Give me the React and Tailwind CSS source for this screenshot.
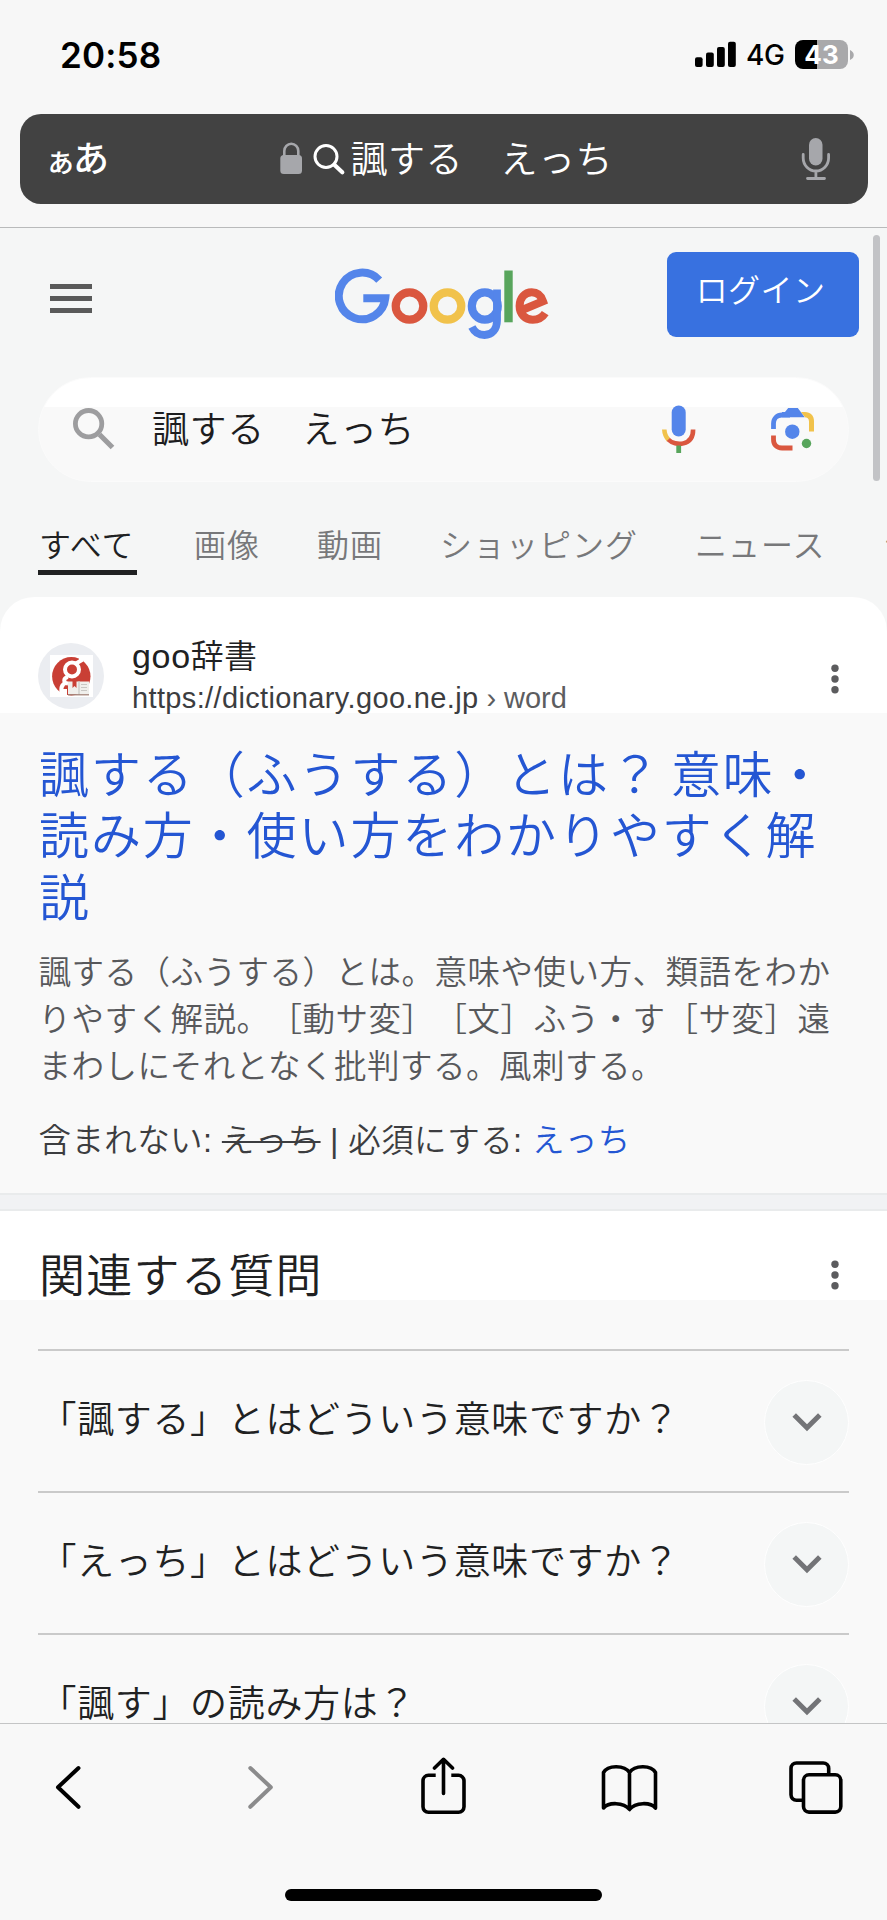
const jp = "font-['Liberation_Sans','Noto_Sans_CJK_JP',sans-serif] [text-spacing-trim:space-all]";

function StatusBar() {
  return (
    <div className="flex h-[114px] items-start pl-[60px] pr-[33px] font-['Inter',sans-serif] text-black">
      <span className="mt-[32.500px] text-[35px] leading-[44px] font-semibold tracking-[0.150px]">20:58</span>
      <svg className="mt-[41px] ml-auto h-[28px] w-[44px]" viewBox="694 41 44 28">
        <rect x="695" y="57.3" width="7.6" height="9.8" rx="2" />
        <rect x="706" y="52.6" width="7.8" height="14.5" rx="2" />
        <rect x="717" y="47" width="7.8" height="20.1" rx="2" />
        <rect x="728" y="41.8" width="7.8" height="25.3" rx="2" />
      </svg>
      <span className="mt-[38px] ml-[8px] w-[40px] text-[28px] leading-[34px] font-medium tracking-[-0.5px]">4G</span>
      <div className="mt-[40px] ml-[9px] flex h-[29px] w-[53px] items-center justify-center rounded-[8px] bg-[linear-gradient(90deg,#000_0,#000_22.5px,#a9a9ab_22.5px)]">
        <span className="text-[26px] leading-[29px] font-bold text-white">43</span>
      </div>
      <svg className="mt-[49px] ml-[2px] h-[12px] w-[4px]" viewBox="0 0 4 12">
        <path d="M0 1c5 2 5 8 0 10z" fill="#a9a9ab" />
      </svg>
    </div>
  );
}

function AddressBar() {
  return (
    <div className="mr-[19px] ml-[19.5px] flex h-[90px] items-center rounded-[21px] bg-[#424242] text-white">
      <span className={`${jp} mt-[4px] ml-[25.500px] flex w-[84.500px] items-baseline font-medium`}>
        <span className="text-[31px] leading-[50px]">ぁ</span>
        <span className="-ml-[3px] text-[36px] leading-[50px]">あ</span>
      </span>
      <svg className="ml-[149px] h-[34px] w-[68px]" viewBox="279 142 68 34">
        <rect x="280.3" y="155" width="21.7" height="19" rx="3.5" fill="#a6a7ab" />
        <path d="M284.3 157v-6a7 7.2 0 0 1 14 0v6" fill="none" stroke="#a6a7ab" strokeWidth="2.6" />
        <circle cx="326" cy="156.5" r="11" fill="none" stroke="#fff" strokeWidth="3" />
        <path d="M334.3 164.8l8 7.5" stroke="#fff" strokeWidth="4.2" strokeLinecap="round" />
      </svg>
      <span className={`${jp} mt-[4px] ml-[4px] text-[37px] leading-[50px] tracking-[0.500px] font-[350] whitespace-pre`}>諷する　えっち</span>
      <svg className="mr-[37px] ml-auto h-[44px] w-[30px]" viewBox="801 136 30 44">
        <rect x="809" y="137" width="13.5" height="27.5" rx="6.75" fill="#a6a7ab" />
        <path d="M803.2 153.5v3.5a12.7 13 0 0 0 25.4 0v-3.5M815.9 170v7M807.5 177.5h17" fill="none" stroke="#a6a7ab" strokeWidth="2.8" strokeLinecap="round" />
      </svg>
    </div>
  );
}

function Logo() {
  return (
    <svg className="h-[74px] w-[214px]" viewBox="335 267 214 74" fill="none">
      <path d="M378.900 279.400A23.300 23.300 0 1 0 385 297.500H363" stroke="#5485ea" strokeWidth="8" transform="translate(0.300 0.700)" />
      <ellipse cx="409.500" cy="306" rx="13.800" ry="13.700" stroke="#da573f" strokeWidth="8.200" />
      <ellipse cx="447.500" cy="306" rx="13.800" ry="13.700" stroke="#f1c24b" strokeWidth="8.200" />
      <ellipse cx="484.800" cy="306" rx="13" ry="13.700" stroke="#5485ea" strokeWidth="8.200" />
      <path d="M497 289.500V320c0 9.500-5 15-12.500 15-6.200 0-10.200-3.200-12.600-8" stroke="#5485ea" strokeWidth="7.800" />
      <rect x="504.300" y="270.500" width="8.400" height="51.800" fill="#58a55c" />
      <path d="M518.500 311.500L543 301.200C541 295.500 537.200 292.300 531.700 292.300c-7 0-12.100 5.900-12.100 13.700 0 8 5.500 13.700 13.200 13.700 5.600 0 9.700-2.400 12.400-6.600" stroke="#da573f" strokeWidth="8" />
    </svg>
  );
}

function PageHeader() {
  return (
    <div className="flex h-[149px] items-start pl-[50px] pr-[28px]">
      <div className="mt-[56px] flex w-[42px] flex-col gap-[7px]">
        <span className="h-[5px] bg-[#5a5a5a]" />
        <span className="h-[5px] bg-[#5a5a5a]" />
        <span className="h-[5px] bg-[#5a5a5a]" />
      </div>
      <div className="mt-[39px] ml-[243px]">
        <Logo />
      </div>
      <button className={`${jp} mt-[23.5px] ml-auto h-[85.500px] w-[192px] rounded-[9px] bg-[#3871e0] pr-[5px] pb-[7px] text-[32px] leading-[40px] tracking-[0.400px] font-[350] text-white`}>
        ログイン
      </button>
    </div>
  );
}

function SearchBox() {
  return (
    <div className="mr-[38px] ml-[38px] flex h-[105px] items-center rounded-full border border-[#fbfbfb] bg-[linear-gradient(180deg,#fff_0,#fff_29px,#f9f9f9_29px)]">
      <svg className="ml-[33px] h-[44px] w-[44px]" viewBox="72 407 44 44" fill="none" stroke="#9d9d9f">
        <circle cx="88.600" cy="422.700" r="13.200" strokeWidth="4.800" />
        <path d="M99.500 433.500l13 13" strokeWidth="5.200" />
      </svg>
      <span className={`${jp} mt-[2px] ml-[36px] text-[37px] leading-[50px] tracking-[0.600px] font-[350] whitespace-pre text-[#1d1d1f]`}>諷する　えっち</span>
      <svg className="ml-auto h-[50px] w-[34px]" viewBox="662 404.500 34 50" fill="none">
        <rect x="671.700" y="405" width="14" height="31" rx="7" fill="#5485ea" />
        <path d="M664.300 429c.2 4.500 1.700 7.700 4.300 10.300" stroke="#f1c24b" strokeWidth="4.600" />
        <path d="M668.300 439c7 7.200 25 6.500 24.800-10" stroke="#da573f" strokeWidth="4.600" />
        <rect x="676.300" y="445" width="4.800" height="7.500" fill="#58a55c" />
      </svg>
      <svg className="mr-[32px] ml-[74px] h-[46px] w-[46px]" viewBox="770 406.500 46 46" fill="none">
        <path d="M773.500 427.500v-5.500c0-5 3.500-8.500 8.500-8.500h8" stroke="#5485ea" strokeWidth="4.800" transform="translate(0 1)" />
        <path d="M782 411.500h3l3.200-4h9.600l7 9.300H782z" fill="#5485ea" />
        <path d="M801 411.500h4c5.500 0 9 3.500 9 9v10.500h-5v-10c0-3-1.800-4.200-4.500-4.200h.5z" fill="#f1c24b" />
        <path d="M773.500 435v4c0 5 3 8.500 8.500 8.500h10.500" stroke="#da573f" strokeWidth="4.800" />
        <circle cx="792.300" cy="431.200" r="7.200" fill="#5485ea" />
        <circle cx="806.500" cy="443" r="4.700" fill="#58a55c" />
      </svg>
    </div>
  );
}

function Tabs() {
  const tabs = ["画像", "動画", "ショッピング", "ニュース", "シ"];
  return (
    <div className={`${jp} flex h-[115px] gap-[57px] overflow-hidden pl-[38px] pt-[40px] text-[32px] leading-[48px] tracking-[1px] font-[350] whitespace-nowrap text-[#77787a]`}>
      <span className="h-[53px] w-[99px] shrink-0 border-b-[5px] border-[#202122] pl-[1px] text-[#202122]">すべて</span>
      {tabs.map((t) => (
        <span key={t} className="shrink-0">{t}</span>
      ))}
    </div>
  );
}

function Dots() {
  return (
    <svg className="h-[32px] w-[10px]" viewBox="0 0 10 32" fill="#5c5c5e">
      <circle cx="5" cy="5.200" r="3.700" />
      <circle cx="5" cy="16" r="3.700" />
      <circle cx="5" cy="26.700" r="3.700" />
    </svg>
  );
}

function Favicon() {
  return (
    <div className="flex h-[66px] w-[66px] items-center justify-center rounded-full bg-[#ebedf1]">
      <svg className="-mt-[1px] h-[44px] w-[44px]" viewBox="49 654 44 44" fill="none">
        <rect x="50" y="655" width="43" height="42" fill="#fff" />
        <circle cx="71.300" cy="676.300" r="19.200" fill="#c93f35" />
        <circle cx="72" cy="669.500" r="7" stroke="#fff" strokeWidth="4" />
        <path d="M76 663.500l5-3v-3M68 677c-5 1-5 6 0 6.500M66.500 682c-6 3-6 8-4 13" stroke="#fff" strokeWidth="4" />
        <path d="M61 697v-8h6v8z" fill="#fff" />
        <rect x="68" y="681.500" width="21" height="13" fill="#f0efec" />
        <path d="M79 681v14M81 684.500h6M81 687.500h6M81 690.500h6" stroke="#c9c7c4" strokeWidth="1.200" />
        <path d="M72.500 680h4v8l-2-2-2 2z" fill="#c93f35" />
        <path d="M68 694.800h21" stroke="#9c7a70" strokeWidth="1.200" />
      </svg>
    </div>
  );
}

function Result() {
  return (
    <div className={`${jp} h-[596px] rounded-t-[34px] bg-[linear-gradient(180deg,#fff_0,#fff_116px,#f9f9f9_116px)] px-[38px] pt-[34px] font-[350]`}>
      <div className="flex h-[92px] items-start">
        <div className="mt-[12px]"><Favicon /></div>
        <div className="ml-[28px] flex flex-col">
          <span className="-mt-[1px] h-[48px] font-['Noto_Sans_CJK_JP',sans-serif] text-[33px] leading-[48px] tracking-[0.200px] text-[#202122]">
            <span className="font-['Liberation_Sans',sans-serif] text-[34px] tracking-[0.700px]">goo</span>辞書
          </span>
          <span className="mt-[2px] text-[29px] leading-[36px] tracking-[0.360px] text-[#3c3d40]">
            https://dictionary.goo.ne.jp<span className="tracking-[-0.050px] text-[#5c5d60]"> › word</span>
          </span>
        </div>
        <div className="mt-[32px] mr-[9px] ml-auto"><Dots /></div>
      </div>
      <div className="mt-[17.500px] ml-[1px] h-[185px] font-['Noto_Sans_CJK_JP',sans-serif] text-[50px] leading-[61.500px] tracking-[1.900px] whitespace-nowrap text-[#2456d3]">
        諷する（ふうする）とは？<span className="tracking-[-2px]"> </span>意味・<br />読み方・使い方をわかりやすく解<br />説
      </div>
      <div className="mt-[20px] ml-[0.500px] h-[142px] font-['Noto_Sans_CJK_JP',sans-serif] text-[32.500px] leading-[47.300px] tracking-[0.500px] whitespace-nowrap text-[#57585b]">
        諷する（ふうする）とは。意味や使い方、類語をわか<br />りやすく解説。［動サ変］［文］ふう・す［サ変］遠<br />まわしにそれとなく批判する。風刺する。
      </div>
      <div className="mt-[30px] ml-[0.500px] text-[32.500px] leading-[47px] tracking-[0.400px] whitespace-nowrap text-[#3c3d40]">
        含まれない: <span className="line-through decoration-2">えっち</span> | 必須にする: <span className="text-[#2456d3]">えっち</span>
      </div>
    </div>
  );
}

function Question({ text }) {
  return (
    <div className="flex h-[142px] shrink-0 items-center justify-between border-t-2 border-[#cacaca]">
      <span className={`${jp} ml-[1.500px] text-[37px] leading-[50px] tracking-[0.650px] font-[350] text-[#202122]`}>{text}</span>
      <div className="mt-[2px] flex h-[85px] w-[85px] items-center justify-center rounded-full border border-white bg-[#f4f6f6]">
        <svg className="h-[20px] w-[32px]" viewBox="0 0 32 20" fill="none" stroke="#737477" strokeWidth="5">
          <path d="M3.200 3l12.800 12.800L28.800 3" />
        </svg>
      </div>
    </div>
  );
}

function RelatedQuestions() {
  return (
    <div className="bg-[linear-gradient(180deg,#fff_0,#fff_89px,#f9f9f9_89px)] px-[38px]">
      <div className="flex h-[138px] items-start justify-between pr-[9px]">
        <h2 className={`${jp} mt-[35px] ml-[1px] text-[46px] leading-[60px] tracking-[1.300px] font-[350] text-[#202122]`}>関連する質問</h2>
        <div className="mt-[48px]"><Dots /></div>
      </div>
      <Question text="「諷する」とはどういう意味ですか？" />
      <Question text="「えっち」とはどういう意味ですか？" />
      <Question text="「諷す」の読み方は？" />
    </div>
  );
}

function Toolbar() {
  return (
    <div className="flex h-[197px] flex-col border-t border-[#c4c5c6] bg-[#f8f8f8]">
      <div className="flex pt-[28px] text-black">
        <svg className="ml-[50px] h-[70px] w-[36px]" viewBox="50 1752 36 70" fill="none" stroke="#000" strokeWidth="4" strokeLinecap="round" strokeLinejoin="round">
          <path d="M78.500 1768L58 1787.300l20.500 19.500" />
        </svg>
        <svg className="ml-[156px] h-[70px] w-[36px]" viewBox="242 1752 36 70" fill="none" stroke="#8b8b8c" strokeWidth="4" strokeLinecap="round" strokeLinejoin="round">
          <path d="M250.300 1768l20.500 19.300-20.500 19.500" />
        </svg>
        <svg className="ml-[138px] h-[70px] w-[54px]" viewBox="416 1752 54 70" fill="none" stroke="#000" strokeWidth="3.600" strokeLinejoin="round">
          <path d="M435.700 1775.300h-7.200a5.500 5.500 0 0 0-5.500 5.500v26a5.500 5.500 0 0 0 5.500 5.500h30a5.500 5.500 0 0 0 5.500-5.500v-26a5.500 5.500 0 0 0-5.500-5.500h-7.200" />
          <path d="M443.500 1760v33.500M434.500 1768l9-8.700 9 8.700" strokeLinecap="round" />
        </svg>
        <svg className="ml-[126px] h-[70px] w-[66px]" viewBox="596 1752 66 70" fill="none" stroke="#000" strokeWidth="3.600" strokeLinejoin="round">
          <path d="M629.500 1772.500c-5-7.500-21.500-8-26 0v35.500c5-6 20-6 26 1.500 6-7.500 21-7.500 26-1.500v-35.500c-4.500-8-21-7.500-26 0zM629.500 1772.500v37" />
        </svg>
        <svg className="ml-[122px] h-[70px] w-[62px]" viewBox="784 1752 62 70" fill="none" stroke="#000" strokeWidth="3.600">
          <path d="M802 1800.300h-5.500a5.500 5.500 0 0 1-5.500-5.500v-26.300a5.500 5.500 0 0 1 5.500-5.500h26.700a5.500 5.500 0 0 1 5.500 5.500v5.500" />
          <rect x="803.500" y="1774.800" width="37.300" height="37.300" rx="5.500" />
        </svg>
      </div>
      <div className="mt-[67px] ml-[285px] h-[12px] w-[317px] rounded-full bg-black" />
    </div>
  );
}

export default function App() {
  return (
    <div className="flex h-[1920px] w-[887px] flex-col overflow-hidden bg-[#f7f7f7]">
      <div className="h-[228px] shrink-0 border-b border-[#b9babb]">
        <StatusBar />
        <AddressBar />
      </div>
      <div className="relative h-[1495px] shrink-0 overflow-hidden bg-[#f5f6f6]">
        <PageHeader />
        <SearchBox />
        <Tabs />
        <Result />
        <div className="h-[18px] border-y-2 border-[#e9ebec] bg-[#f1f2f4]" />
        <RelatedQuestions />
        <div className="absolute top-[7px] right-[7px] h-[246px] w-[7.500px] rounded-full bg-[#c2c3c6]" />
      </div>
      <Toolbar />
    </div>
  );
}
